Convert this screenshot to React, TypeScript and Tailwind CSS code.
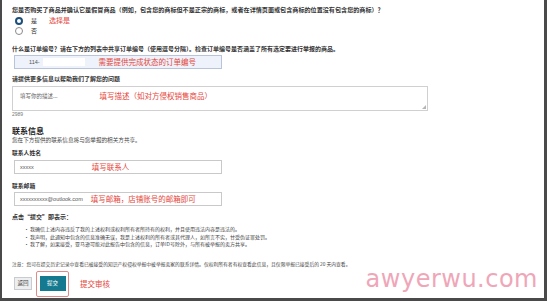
import React from 'react';

const cjk = "font-['Noto_Sans_CJK_SC','Noto_Sans',sans-serif]";

function Radio({ checked, label, note }: { checked?: boolean; label: string; note?: string }) {
  return (
    <div className="flex items-center h-[7px]">
      {checked ? (
        <span className="w-[8px] h-[8px] rounded-full border-[2.5px] border-[#1c4f7a] bg-white ml-[3px]" />
      ) : (
        <span className="w-[8px] h-[8px] rounded-full border border-[#8a8a8a] bg-white ml-[3px]" />
      )}
      <span className="ml-[8px] text-[6px] text-[#333]">{label}</span>
      {note && <span className="ml-[12px] text-[7px] text-[#e4453a]">{note}</span>}
    </div>
  );
}

function Input({ value, note, noteGap }: { value: string; note: string; noteGap: string }) {
  return (
    <div className="w-[208px] h-[14px] ml-[2px] flex items-center border bg-white border-[#c9c9c9]">
      <span className="ml-[5px] text-[5.5px] text-[#555] font-['Liberation_Sans',sans-serif]">{value}</span>
      <span className={`${noteGap} text-[7.5px] text-[#e4453a]`}>{note}</span>
    </div>
  );
}

export default function App() {
  return (
    <div className={`w-[550px] h-[303px] bg-white ${cjk}`}>
      <div className="relative w-[547px] h-[301px] border-l-2 border-r-[3px] border-b-[3px] border-[#4a4a4a] pl-[10px] pt-[7px] overflow-hidden">
        <p className="text-[6.1px] leading-[6px] text-[#333] font-bold">
          您是否购买了商品并确认它是假冒商品（例如，包含您的商标但不是正宗的商标，或者在详情页面或包含商标的位置没有包含您的商标）？
        </p>
        <div className="mt-[4px]">
          <Radio checked label="是" note="选择是" />
        </div>
        <div className="mt-[3px]">
          <Radio label="否" />
        </div>

        <p className="mt-[12px] text-[6px] leading-[6px] text-[#333] font-bold">
          什么是订单编号？请在下方的列表中共享订单编号（使用逗号分隔）。检查订单编号是否涵盖了所有选定要进行举报的商品。
        </p>
        <div className="mt-[3px] w-[208px] h-[14px] ml-[2px] flex items-center border bg-[#eef2fa] border-[#b9c4da]">
          <span className="ml-[14px] text-[5.5px] text-[#555] font-['Liberation_Sans',sans-serif]">114-</span>
          <span className="ml-[3px] w-[42px] h-[8px] bg-white" />
          <span className="ml-[14px] text-[7.5px] text-[#e4453a]">需要提供完成状态的订单编号</span>
        </div>

        <p className="mt-[7px] text-[6px] leading-[6px] text-[#333] font-bold">请提供更多信息以帮助我们了解您的问题</p>
        <div className="relative mt-[4px] w-[416px] h-[25px] border border-[#d0d0d0] bg-white flex items-start pt-[5px]">
          <span className="ml-[7px] text-[5.5px] text-[#666]">填写你的描述...</span>
          <span className="ml-[42px] -mt-[2px] text-[7.5px] text-[#e4453a]">填写描述（如对方侵权销售商品）</span>
          <span className="absolute right-[1px] bottom-[1px] w-0 h-0 border-l-[4px] border-l-transparent border-b-[4px] border-b-[#b5b5b5]" />
        </div>
        <p className="mt-[1px] text-[5px] leading-[5px] text-[#777] font-['Liberation_Sans',sans-serif]">2989</p>

        <p className="mt-[10px] text-[8px] leading-[8px] text-[#222] font-bold">联系信息</p>
        <p className="mt-[3px] text-[5.6px] leading-[5px] text-[#444]">您在下方提供的联系信息将与您举报的相关方共享。</p>

        <p className="mt-[7px] text-[5.8px] leading-[6px] text-[#333] font-bold">联系人姓名</p>
        <div className="mt-[4px]">
          <Input value="xxxxx" note="填写联系人" noteGap="ml-[58px]" />
        </div>
        <p className="mt-[9px] text-[5.8px] leading-[6px] text-[#333] font-bold">联系邮箱</p>
        <div className="mt-[3px]">
          <Input value="xxxxxxxxxx@outlook.com" note="填写邮箱，店铺账号的邮箱即可" noteGap="ml-[8px]" />
        </div>

        <p className="mt-[8px] text-[6px] leading-[6px] text-[#333] font-bold">点击“提交”即表示：</p>
        <ul className="mt-[5px] ml-[12px] text-[5px] leading-[7.5px] text-[#444]">
          <li className="flex">
            <span className="w-[6px]">•</span>我确信上述内容违反了我的上述权利或权利所有者所持有的权利，并且使用违法内容是违法的。
          </li>
          <li className="flex">
            <span className="w-[6px]">•</span>我声明，此通知中包含的信息准确无误，我是上述权利的所有者或其代理人，如所言不实，甘受伪证罪处罚。
          </li>
          <li className="flex">
            <span className="w-[6px]">•</span>我了解，如果接受，亚马逊可能对此报告中包含的信息，订单ID号除外，与所有被举报的卖方共享。
          </li>
        </ul>

        <p className="mt-[13px] text-[4.8px] leading-[6px] text-[#444]">
          注意：您可在提交历史记录中查看已被接受的知识产权侵权举报中被举报卖家的联系详情。仅权利所有者有权查看此信息，且仅限举报已接受后的 20 天内查看。
        </p>

        <div className="mt-[4px] flex items-center">
          <button className="ml-[2px] w-[18px] h-[13px] bg-[#eceef0] border border-[#c8cbcf] text-[5.5px] text-[#444] flex items-center justify-center">
            返回
          </button>
          <div className="ml-[4px] w-[33px] h-[26px] border border-[#e08a8a] rounded-[2px] flex items-center justify-center">
            <button className="w-[26px] h-[15px] bg-[#157a90] text-white text-[5.5px] flex items-center justify-center">
              提交
            </button>
          </div>
          <span className="ml-[11px] text-[7.5px] text-[#e4453a]">提交审核</span>
        </div>

        <span className="absolute right-[6px] bottom-[7px] text-[24px] leading-none tracking-[0.5px] text-[#efa6b8] font-['DejaVu_Sans',sans-serif]">
          awyerwu.com
        </span>
      </div>
    </div>
  );
}
